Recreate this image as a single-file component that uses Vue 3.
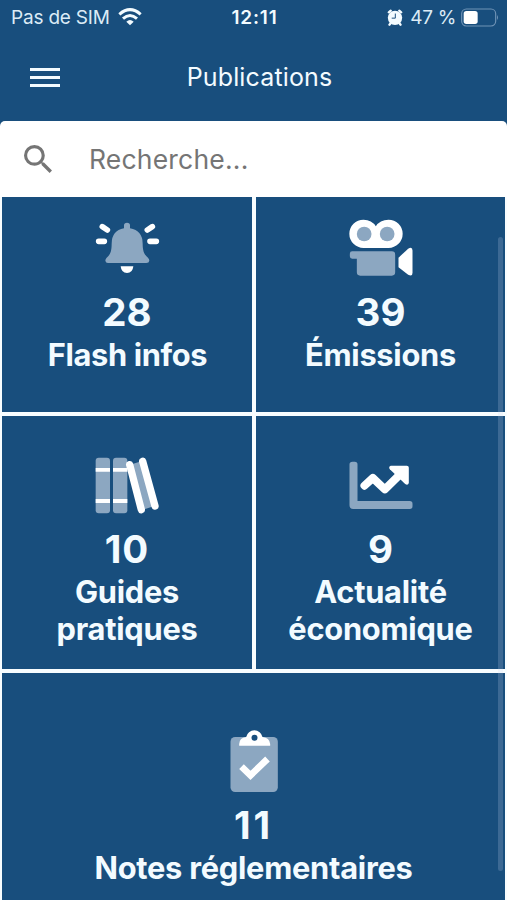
<script setup>
const tiles = [
  { icon: 'bell', count: 28, lines: ['Flash infos'] },
  { icon: 'camera', count: 39, lines: ['Émissions'] },
  { icon: 'books', count: 10, lines: ['Guides', 'pratiques'] },
  { icon: 'chart', count: 9, lines: ['Actualité', 'économique'] },
  { icon: 'clipboard', count: 11, lines: ['Notes réglementaires'] },
]
</script>

<template>
  <div class="screen">
    <div class="status">
      <div class="side">
        <span class="carrier">Pas de SIM</span>
        <svg class="wifi" viewBox="0 0 72 54">
          <path d="M4 19Q36-9 68 19" /><path d="M15 32Q36 13 57 32" />
          <path class="dot" d="M36 52L25 41Q36 31 47 41Z" />
        </svg>
      </div>
      <span class="time">12:11</span>
      <div class="side right">
        <svg class="alarm" viewBox="0 0 48 52">
          <path d="M5 10L11 5M43 10L37 5M11 43L7 48M37 43L41 48" stroke="#f3fbff" stroke-width="7" stroke-linecap="round" />
          <circle cx="24" cy="27" r="22" fill="#f3fbff" />
          <path d="M25 14V28H14" fill="none" stroke="#184e7d" stroke-width="3" />
        </svg>
        <span class="percent">47 %</span>
        <svg class="battery" viewBox="0 0 114 57">
          <rect x="2" y="3" width="102" height="51" rx="14" fill="none" stroke="#6f93b6" stroke-width="3.5" />
          <rect x="8" y="9" width="42" height="39" rx="8" fill="#fff" />
          <path d="M108 21Q114 28 108 36Z" fill="#6f93b6" />
        </svg>
      </div>
    </div>

    <header class="bar">
      <div class="burger"><i></i><i></i><i></i></div>
      <h1>Publications</h1>
    </header>

    <div class="search">
      <svg viewBox="3 3 17.5 17.5">
        <path d="M15.5 14h-.79l-.28-.27A6.47 6.47 0 0 0 16 9.5 6.5 6.5 0 1 0 9.5 16c1.61 0 3.09-.59 4.23-1.57l.27.28v.79l5 4.99L20.49 19l-4.99-5zm-6 0C7.01 14 5 11.99 5 9.5S7.01 5 9.5 5 14 7.01 14 9.5 11.99 14 9.5 14z" />
      </svg>
      <span>Recherche...</span>
    </div>

    <main class="grid">
      <section v-for="t in tiles" :key="t.icon" class="tile" :class="t.icon">
        <svg v-if="t.icon === 'bell'" class="icon" viewBox="21 30 240 189">
          <path class="soft" d="M132 70V61Q132 53 141 53T150 61V70Q188 77 188 116C188 140 194 150 204 158Q208 162 208 167Q207 174 199 174H84Q77 174 76 167Q76 162 80 158C90 150 95 140 95 116Q95 77 132 70Z" />
          <path class="full" d="M122 184H160Q158 204 141 204T122 184Z" />
          <path class="ray" d="M67 65L82 75M56 109H73M217 65L202 75M210 109H229" />
        </svg>
        <svg v-else-if="t.icon === 'camera'" class="icon" viewBox="31.5 30 240 189">
          <path class="full" d="M99 44Q124 44 136 64Q148 44 174 44A42 42 0 0 1 174 129H99A42 42 0 0 1 99 44Z" />
          <circle cx="101" cy="87" r="22" class="soft" /><circle cx="170" cy="87" r="22" class="soft" />
          <path class="soft" d="M65 139H184Q194 139 194 149V202Q194 212 184 212H89Q79 212 79 202V161H65Q58 161 58 154V146Q58 139 65 139Z" />
          <path class="full" d="M204 158L233 131Q246 124 246 137V203Q246 216 233 209L204 187Z" />
        </svg>
        <svg v-else-if="t.icon === 'books'" class="icon" viewBox="21 30 240 180">
          <rect class="soft" x="47" y="38" width="43" height="167" rx="9" />
          <rect class="soft" x="99" y="38" width="43" height="167" rx="9" />
          <path class="full" d="M47 69H90V80H47ZM47 162H90V174H47ZM99 69H142V80H99ZM99 162H142V174H99Z" />
          <path class="soft" d="M155 58L184 49L221 184L189 194Z" />
          <path class="spine" d="M149 59L184 194M188 49L225 183" />
        </svg>
        <svg v-else-if="t.icon === 'chart'" class="icon" viewBox="31.5 30 240 180">
          <path class="soft" d="M66 50H73Q81 50 81 58V168H238Q246 168 246 176V184Q246 192 238 192H68Q57 192 57 181V58Q57 50 66 50Z" />
          <path class="trend" d="M102 122L127 99L163 133L214 83" />
          <path class="full" d="M181 62H229Q235 62 235 68V114Q232 123 224 117L178 73Q173 65 181 62Z" />
        </svg>
        <svg v-else class="icon" viewBox="10.5 21 240 192" overflow="visible">
          <rect class="soft" x="60" y="51" width="142" height="165" rx="14" />
          <path class="full" d="M86 77V72Q87 53 107 51A25 25 0 0 1 156 51Q177 53 179 72V77Z" />
          <circle cx="132" cy="53" r="9" fill="#184e7d" />
          <path class="check" d="M93 140L120 166L171 117" />
        </svg>
        <strong class="count">{{ t.count }}</strong>
        <span v-for="line in t.lines" :key="line" class="label">{{ line }}</span>
      </section>
    </main>
    <div class="scrollbar"></div>
  </div>
</template>

<style>
body { margin: 0; overflow: hidden; }
</style>

<style scoped>
.screen {
  position: relative;
  box-sizing: border-box;
  width: 507px;
  height: 900px;
  overflow: hidden;
  display: flex;
  flex-direction: column;
  background: #184e7d;
  color: #f3fbff;
  font-family: Inter, "Liberation Sans", sans-serif;
}
.status {
  height: 34px;
  display: grid;
  grid-template-columns: 1fr auto 1fr;
  align-items: center;
  padding: 0 8px 0 11px;
  font-size: 19px;
}
.side { display: flex; align-items: center; color: #dcebf6; }
.right { justify-content: flex-end; }
.carrier { letter-spacing: -0.2px; white-space: nowrap; }
.wifi { width: 24px; height: 18px; margin-left: 8px; fill: none; stroke: #f3fbff; stroke-width: 9; }
.wifi .dot { fill: #f3fbff; stroke: none; }
.time { font-size: 19px; font-weight: 600; letter-spacing: 0.8px; margin-right: 1px; }
.alarm { width: 16px; height: 17px; margin-right: 7px; }
.percent { white-space: nowrap; letter-spacing: -0.3px; }
.battery { width: 38px; height: 19px; margin-left: 5px; }
.bar {
  height: 87px;
  display: grid;
  grid-template-columns: 60px 1fr 60px;
  align-items: center;
}
.burger { display: flex; flex-direction: column; gap: 5px; margin: 0 0 1px 30px; width: 30px; }
.burger i { height: 3px; background: #f3fbff; }
h1 { margin: 0 0 1px; padding-left: 12px; font-size: 25px; font-weight: 400; letter-spacing: 0.15px; text-align: center; line-height: 30px; }
.search {
  height: 76px;
  box-sizing: border-box;
  display: flex;
  align-items: center;
  padding-left: 24px;
  background: #fff;
  border-radius: 5px 5px 0 0;
  color: #757575;
  font-size: 26.5px;
  letter-spacing: 0.2px;
}
.search svg { width: 28px; height: 28px; margin-right: 37px; fill: #757575; }
.grid {
  flex: 1;
  display: grid;
  grid-template-columns: 250px 249px;
  grid-template-rows: 215px 253px 227px;
  gap: 4px;
  padding: 0 2px;
  background: #f8fdff;
}
.tile {
  display: flex;
  flex-direction: column;
  align-items: center;
  padding-top: 18px;
  background: #184e7d;
}
.books, .chart { padding-top: 39px; }
.clipboard { grid-column: 1 / 3; padding-top: 54px; }
.icon { width: 80px; flex: none; }
.soft { fill: #8ca7c1; }
.full { fill: #fff; }
.ray { fill: none; stroke: #fff; stroke-width: 17; stroke-linecap: round; }
.spine { fill: none; stroke: #fff; stroke-width: 22; stroke-linecap: round; }
.trend { fill: none; stroke: #fff; stroke-width: 24; stroke-linejoin: round; stroke-linecap: round; }
.check { fill: none; stroke: #fff; stroke-width: 20; }
.count { margin: 15px 0 5px; font-size: 38.5px; font-weight: 700; line-height: 38px; }
.books .count { letter-spacing: 1px; }
.clipboard .count { letter-spacing: 3px; }
.label { font-size: 30.8px; font-weight: 700; line-height: 37px; letter-spacing: -0.25px; white-space: nowrap; }
.bell .label { padding-left: 1px; letter-spacing: -0.35px; }
.scrollbar {
  position: absolute;
  top: 237px;
  right: 4px;
  width: 5px;
  height: 634px;
  border-radius: 3px;
  background: rgba(205, 215, 240, 0.2);
}
</style>
